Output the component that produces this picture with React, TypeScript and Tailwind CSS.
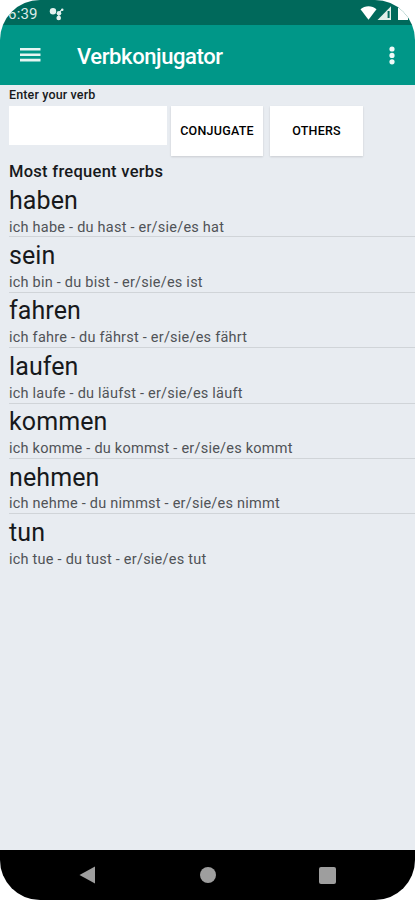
const verbs = [
  { name: "haben", forms: "ich habe - du hast - er/sie/es hat" },
  { name: "sein", forms: "ich bin - du bist - er/sie/es ist" },
  { name: "fahren", forms: "ich fahre - du fährst - er/sie/es fährt" },
  { name: "laufen", forms: "ich laufe - du läufst - er/sie/es läuft" },
  { name: "kommen", forms: "ich komme - du kommst - er/sie/es kommt" },
  { name: "nehmen", forms: "ich nehme - du nimmst - er/sie/es nimmt" },
  { name: "tun", forms: "ich tue - du tust - er/sie/es tut" },
];

function StatusBar() {
  return (
    <div className="flex h-[25px] shrink-0 items-start bg-[#00695b] text-white">
      <span className="ml-[8px] mt-[5px] w-[41px] text-[15px] leading-[18px] tracking-[0.2px] text-[#dcebe8]">6:39</span>
      <svg className="mt-[6px]" width="16" height="16" viewBox="0 0 16 16" fill="#e4f2ef">
        <circle cx="4" cy="5.2" r="3.2" />
        <circle cx="10" cy="7.2" r="2.3" />
        <circle cx="9.7" cy="12" r="2.3" />
        <circle cx="13.3" cy="3.8" r="1.2" />
        <path d="M9.6 7l3.4-3.4M9.8 7v5" stroke="#e4f2ef" strokeWidth="1.2" />
      </svg>
      <svg className="ml-auto mt-[5px]" width="55" height="18" viewBox="0 0 55 18">
        <path d="M.5 4.2C4.8.2 12.2.2 16.5 4.2L8.500 14.800z" fill="#fff" />
        <path d="M31 1.200V15H17.500z" fill="#e1efe9" />
        <path d="M27.600 6h2v7h-2z" fill="#00695b" />
        <path d="M38 3h10v12h-10z" fill="#fff" />
      </svg>
    </div>
  );
}

function Toolbar() {
  return (
    <header className="flex h-[60px] shrink-0 items-center bg-[#009788] text-white">
      <svg className="ml-[20px]" width="21" height="16" viewBox="0 0 21 16" fill="#e5f5f2">
        <path d="M0 1h20.500v2.600H0zM0 6.400h20.500V9H0zM0 11.800h20.500v2.600H0z" />
      </svg>
      <h1 className="ml-[36px] mt-[4px] text-[22px] font-medium leading-[28px] tracking-[-0.4px]">Verbkonjugator</h1>
      <svg className="ml-auto mr-[20px]" width="6" height="20" viewBox="0 0 6 20" fill="#eefaf8">
        <circle cx="3" cy="4" r="2.600" />
        <circle cx="3" cy="10.400" r="2.600" />
        <circle cx="3" cy="16.800" r="2.600" />
      </svg>
    </header>
  );
}

function NavigationBar() {
  return (
    <nav className="flex h-[50px] shrink-0 items-center bg-black">
      <svg className="ml-[79px]" width="16" height="18" viewBox="0 0 16 18" fill="#9e9e9e">
        <path d="M.5 9L16 .5v17z" />
      </svg>
      <div className="ml-[105px] size-[16px] rounded-full bg-[#9e9e9e]" />
      <div className="ml-[103px] size-[17px] rounded-[2px] bg-[#9e9e9e]" />
    </nav>
  );
}

export default function App() {
  return (
    <div className="h-[900px] w-[415px] bg-white font-[Roboto,sans-serif]">
      <div className="flex h-full flex-col overflow-hidden rounded-[40px] bg-[#e8ecf1] text-[#17191c]">
        <StatusBar />
        <Toolbar />
        <main className="flex-1 pl-[9px]">
          <label htmlFor="verb" className="block h-[20px] pt-[1px] text-[12.500px] font-medium leading-[17px] tracking-[0.14px]">
            Enter your verb
          </label>
          <div className="flex h-[54px] items-start">
            <input id="verb" className="mt-px h-[39px] w-[158px] bg-white outline-none" />
            <button className="ml-[4px] mt-px h-[50px] w-[92px] whitespace-nowrap bg-white pt-px text-[12.500px] font-medium tracking-[0.24px] text-black shadow-[0_1px_2px_#0002]">
              CONJUGATE
            </button>
            <button className="ml-[7px] mt-px h-[50px] w-[93px] bg-white pt-px text-[12.500px] font-medium tracking-[0.2px] text-black shadow-[0_1px_2px_#0002]">
              OTHERS
            </button>
          </div>
          <h2 className="h-[23px] pt-[3px] text-[16.500px] font-medium leading-[20px] tracking-[0.28px]">Most frequent verbs</h2>
          <ul>
            {verbs.map((verb) => (
              <li key={verb.name} className="h-[55.4px] border-b border-[#d0d4d8] last:border-b-0">
                <div className="h-[32px] pt-[2.600px] text-[25px] leading-[32px] tracking-[0.1px]">{verb.name}</div>
                <div className="pt-[4.500px] text-[14.500px] leading-[18px] tracking-[0.23px] text-[#505357]">{verb.forms}</div>
              </li>
            ))}
          </ul>
        </main>
        <NavigationBar />
      </div>
    </div>
  );
}
